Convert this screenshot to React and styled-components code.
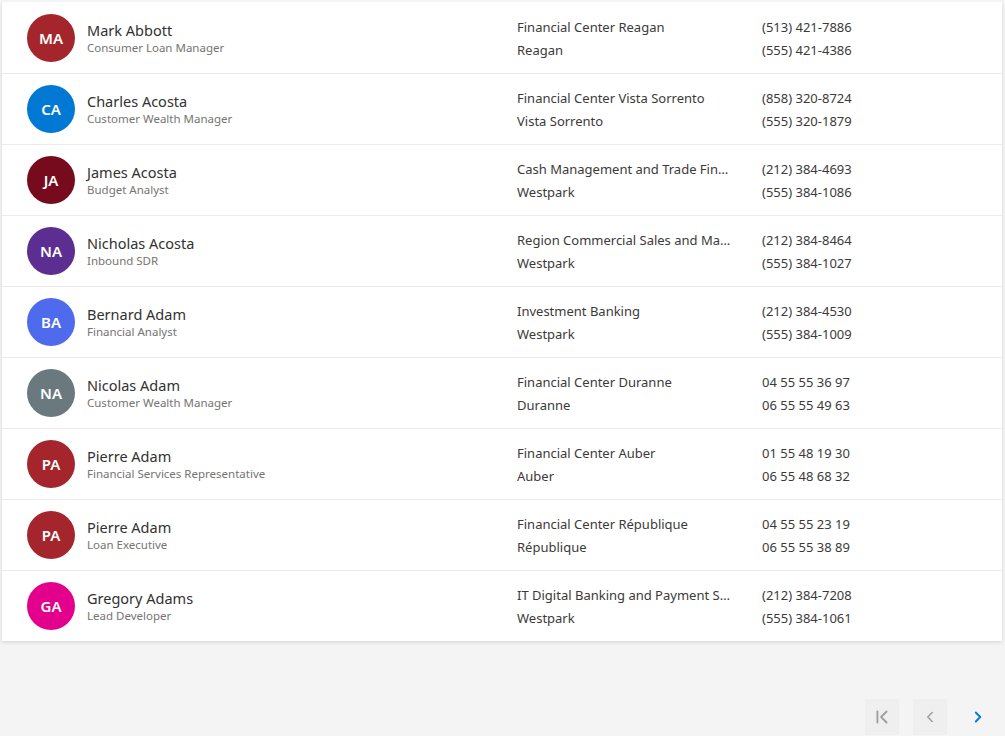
import React from "react";
import styled, { createGlobalStyle } from "styled-components";
import { ChevronFirst, ChevronLeft, ChevronRight } from "lucide-react";

const GlobalStyle = createGlobalStyle`
  body {
    margin: 0;
    background: #f4f4f4;
    font-family: "Segoe UI", "Noto Sans", "Open Sans", sans-serif;
    color: #323130;
  }
`;

const people = [
  { initials: "MA", color: "#a4262c", name: "Mark Abbott", title: "Consumer Loan Manager", office: "Financial Center Reagan", city: "Reagan", phone: "(513) 421-7886", mobile: "(555) 421-4386" },
  { initials: "CA", color: "#0078d4", name: "Charles Acosta", title: "Customer Wealth Manager", office: "Financial Center Vista Sorrento", city: "Vista Sorrento", phone: "(858) 320-8724", mobile: "(555) 320-1879" },
  { initials: "JA", color: "#750b1c", name: "James Acosta", title: "Budget Analyst", office: "Cash Management and Trade Finance", city: "Westpark", phone: "(212) 384-4693", mobile: "(555) 384-1086" },
  { initials: "NA", color: "#5c2e91", name: "Nicholas Acosta", title: "Inbound SDR", office: "Region Commercial Sales and Management", city: "Westpark", phone: "(212) 384-8464", mobile: "(555) 384-1027" },
  { initials: "BA", color: "#4f6bed", name: "Bernard Adam", title: "Financial Analyst", office: "Investment Banking", city: "Westpark", phone: "(212) 384-4530", mobile: "(555) 384-1009" },
  { initials: "NA", color: "#69797e", name: "Nicolas Adam", title: "Customer Wealth Manager", office: "Financial Center Duranne", city: "Duranne", phone: "04 55 55 36 97", mobile: "06 55 55 49 63" },
  { initials: "PA", color: "#a4262c", name: "Pierre Adam", title: "Financial Services Representative", office: "Financial Center Auber", city: "Auber", phone: "01 55 48 19 30", mobile: "06 55 48 68 32" },
  { initials: "PA", color: "#a4262c", name: "Pierre Adam", title: "Loan Executive", office: "Financial Center République", city: "République", phone: "04 55 55 23 19", mobile: "06 55 55 38 89" },
  { initials: "GA", color: "#e3008c", name: "Gregory Adams", title: "Lead Developer", office: "IT Digital Banking and Payment Systems", city: "Westpark", phone: "(212) 384-7208", mobile: "(555) 384-1061" },
];

const Card = styled.div`
  margin: 2px 3px 0 2px;
  background: #fff;
  box-shadow: 0 1.6px 3.6px rgba(0, 0, 0, 0.13), 0 0.3px 0.9px rgba(0, 0, 0, 0.11);
`;

const Row = styled.div`
  display: grid;
  grid-template-columns: 515px 245px 1fr;
  align-items: center;
  height: 70px;
  border-top: 1px solid ${(p) => (p.$first ? "transparent" : "#edebe9")};
`;

const Persona = styled.div`
  display: flex;
  align-items: center;
  gap: 12px;
  padding-left: 25px;
`;

const Avatar = styled.div`
  width: 48px;
  height: 48px;
  border-radius: 50%;
  background: ${(p) => p.color};
  color: #fff;
  display: flex;
  align-items: center;
  justify-content: center;
  font-size: 15px;
  font-weight: 600;
`;

const Name = styled.div`
  font-size: 14.5px;
  color: #323130;
  line-height: 19px;
`;

const Title = styled.div`
  font-size: 11.5px;
  color: #767472;
  line-height: 16px;
`;

const Lines = styled.div`
  display: flex;
  flex-direction: column;
  gap: 4px;
  font-size: 13px;
  line-height: 19px;
  color: #3b3a39;
  min-width: 0;
  padding: 2px 28px 0 0;
`;

const Line = styled.div`
  white-space: nowrap;
  overflow: hidden;
  text-overflow: ellipsis;
`;

const Pager = styled.div`
  display: flex;
  justify-content: flex-end;
  gap: 14px;
  padding: 58px 10px 0 0;
`;

const PageButton = styled.button`
  width: 34px;
  height: 36px;
  border: none;
  padding: 0;
  display: flex;
  align-items: center;
  justify-content: center;
  background: ${(p) => (p.disabled ? "#efefef" : "transparent")};
  color: ${(p) => (p.disabled ? "#9e9e9e" : "#0078d4")};
  cursor: ${(p) => (p.disabled ? "default" : "pointer")};
`;

export default function App() {
  return (
    <>
      <GlobalStyle />
      <Card>
        {people.map((p, i) => (
          <Row key={i} $first={i === 0}>
            <Persona>
              <Avatar color={p.color}>{p.initials}</Avatar>
              <div>
                <Name>{p.name}</Name>
                <Title>{p.title}</Title>
              </div>
            </Persona>
            <Lines>
              <Line>{p.office}</Line>
              <Line>{p.city}</Line>
            </Lines>
            <Lines>
              <Line>{p.phone}</Line>
              <Line>{p.mobile}</Line>
            </Lines>
          </Row>
        ))}
      </Card>
      <Pager>
        <PageButton disabled>
          <ChevronFirst size={22} strokeWidth={2} />
        </PageButton>
        <PageButton disabled>
          <ChevronLeft size={18} strokeWidth={2} />
        </PageButton>
        <PageButton>
          <ChevronRight size={18} strokeWidth={2.4} />
        </PageButton>
      </Pager>
    </>
  );
}
